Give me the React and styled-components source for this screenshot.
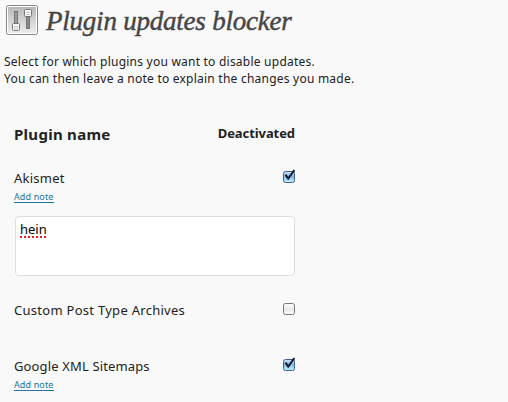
import React from "react";
import styled, { createGlobalStyle } from "styled-components";

const GlobalStyle = createGlobalStyle`
  * { box-sizing: border-box; }
  body { margin: 0; background: #f9f9f9; }
`;

const Page = styled.main`
  min-height: 402px;
  overflow: hidden;
  background: #f9f9f9;
  color: #222;
  font-family: "Noto Sans", "Open Sans", sans-serif;
  font-size: 13px;
`;

const Header = styled.header`
  display: flex;
  align-items: flex-start;
  height: 53px;
  padding: 5px 0 0 6px;
`;

const Title = styled.h1`
  margin: 0 0 0 8px;
  color: #464646;
  font: italic 400 27px/32px "Liberation Serif", serif;
  letter-spacing: -0.22px;
  -webkit-text-stroke: 0.45px #464646;
  white-space: nowrap;
`;

const Intro = styled.p`
  margin: 0 0 0 4px;
  font-size: 12px;
  line-height: 17px;
  letter-spacing: 0.23px;
  white-space: nowrap;
`;

const IntroLine = styled.span`
  display: block;
`;

const PluginTable = styled.section`
  width: 281px;
  margin: 37px 0 0 14px;
`;

const Row = styled.div`
  display: flex;
  justify-content: space-between;
  height: ${(p) => p.$height}px;
`;

const NameHeading = styled.h2`
  margin: 0;
  font-size: 15px;
  line-height: 20px;
  letter-spacing: 0.28px;
`;

const StateHeading = styled.h3`
  margin: 0;
  font-size: 13px;
  line-height: 18px;
  letter-spacing: -0.08px;
`;

const PluginName = styled.div`
  padding-top: ${(p) => p.$offset || 0}px;
  line-height: 18px;
  letter-spacing: ${(p) => p.$spacing}px;
`;

const NoteLink = styled.a`
  display: block;
  width: 40px;
  height: 13px;
  margin-top: ${(p) => p.$gap}px;
  border-bottom: 1px solid #21759b;
  color: #21759b;
  font-size: 9px;
  line-height: 13px;
  letter-spacing: 0.12px;
  text-decoration: none;
  white-space: nowrap;
`;

const Note = styled.div`
  width: 280px;
  height: 60px;
  margin: 0 0 25px 1px;
  padding: 3px 4px;
  border: 1px solid #dfdfdf;
  border-radius: 4px;
  background: #fff;
  color: #000;
  line-height: 18px;
`;

const Misspelling = styled.span`
  display: inline-block;
  height: 18px;
  background: repeating-linear-gradient(90deg, #f01818 0 2px, transparent 2px 4px) 0 100% / 100% 2px no-repeat;
`;

const ToggleIcon = styled.svg`
  flex: none;
  width: 13px;
  height: 16px;
  margin-top: ${(p) => p.$top}px;
`;

function SlidersIcon() {
  return (
    <svg width="32" height="30" viewBox="0 0 32 30" aria-hidden="true">
      <defs>
        <linearGradient id="plate" x2="0" y2="1">
          <stop stopColor="#b9b9b9" />
          <stop offset="1" stopColor="#ececec" />
        </linearGradient>
      </defs>
      <rect x=".5" y=".5" width="31" height="29" rx="2" fill="#fff" stroke="#868686" />
      <rect x="2" y="2" width="28" height="26" fill="url(#plate)" />
      <rect x="8.5" y="6.5" width="3" height="14" fill="#999" stroke="#777" />
      <rect x="20.5" y="10.5" width="3" height="13" fill="#888" stroke="#777" />
      <g fill="#f5f5f5" stroke="#777">
        <rect x="6.5" y="18.5" width="7" height="7" rx="1" />
        <rect x="18.5" y="4.5" width="7" height="7" rx="1" />
      </g>
      <path d="M8 21.5h4M8 23.5h4M20 7.5h4M20 9.5h4" stroke="#c5c5c5" />
    </svg>
  );
}

function Checkbox({ checked, label, top = 0 }) {
  return (
    <ToggleIcon $top={top} viewBox="0 0 13 16" role="checkbox" aria-checked={checked} aria-label={label}>
      <defs>
        <linearGradient id="checkedFill" x2="0" y2="1">
          <stop stopColor="#d3e6f8" />
          <stop offset=".45" stopColor="#83b8ec" />
          <stop offset="1" stopColor="#c3f2ff" />
        </linearGradient>
        <linearGradient id="emptyFill" x2="0" y2="1">
          <stop stopColor="#fff" />
          <stop offset=".5" stopColor="#e9e9e9" />
          <stop offset="1" stopColor="#fff" />
        </linearGradient>
      </defs>
      <rect x="1.5" y="3.5" width="11" height="11" rx="2"
        fill={checked ? "url(#checkedFill)" : "url(#emptyFill)"}
        stroke={checked ? "#43618d" : "#777"} />
      {checked && <path d="M3.5 6.6 6.2 10.6 12.4 2" fill="none" stroke="#181b29" strokeWidth="2" />}
    </ToggleIcon>
  );
}

export default function App() {
  return (
    <>
      <GlobalStyle />
      <Page>
        <Header>
          <SlidersIcon />
          <Title>Plugin updates blocker</Title>
        </Header>
        <Intro>
          <IntroLine>Select for which plugins you want to disable updates.</IntroLine>
          <IntroLine>You can then leave a note to explain the changes you made.</IntroLine>
        </Intro>
        <PluginTable>
          <Row $height={44}>
            <NameHeading>Plugin name</NameHeading>
            <StateHeading>Deactivated</StateHeading>
          </Row>
          <Row $height={48}>
            <div>
              <PluginName $offset={1} $spacing={0.24}>Akismet</PluginName>
              <NoteLink $gap={3}>Add note</NoteLink>
            </div>
            <Checkbox checked label="Akismet" />
          </Row>
          <Note><Misspelling>hein</Misspelling></Note>
          <Row $height={56}>
            <PluginName $spacing={0.28}>Custom Post Type Archives</PluginName>
            <Checkbox checked={false} label="Custom Post Type Archives" top={-1} />
          </Row>
          <Row $height={45}>
            <div>
              <PluginName $spacing={0.14}>Google XML Sitemaps</PluginName>
              <NoteLink $gap={3}>Add note</NoteLink>
            </div>
            <Checkbox checked label="Google XML Sitemaps" top={-1} />
          </Row>
        </PluginTable>
      </Page>
    </>
  );
}
